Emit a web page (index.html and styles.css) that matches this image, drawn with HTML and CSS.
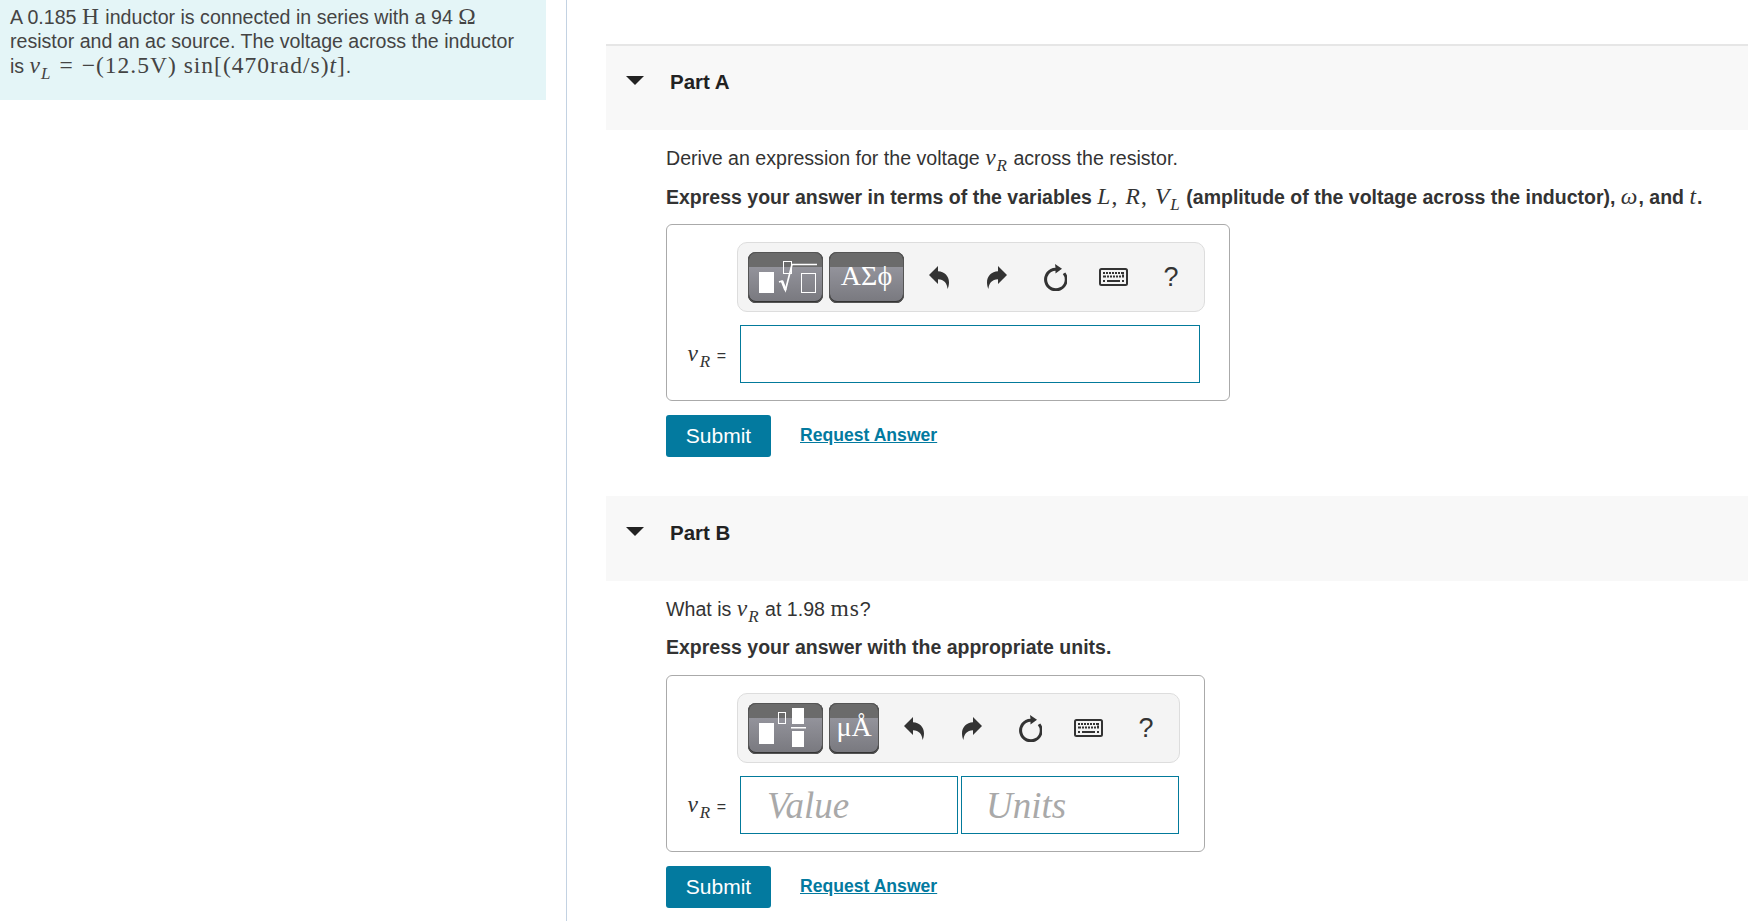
FILE: index.html
```html
<!DOCTYPE html>
<html lang="en">
<head>
    <meta charset="UTF-8">
    <title>Part A and Part B</title>
    <link rel="stylesheet" href="styles.css">
</head>
<body>
    <svg class="sprite" width="0" height="0">
        <symbol id="i-undo" viewBox="0 0 20 23">
            <path d="M0 9 9 0V5.300C15.500 5.600 20 10 20 16.500 20 19 19.300 21.500 18.500 23 18.300 17.500 15 13.500 9 13.300V18Z"/>
        </symbol>
        <symbol id="i-redo" viewBox="0 0 20 23">
            <path d="M20 9 11 0V5.300C4.500 5.600 0 10 0 16.500 0 19 .7 21.500 1.500 23 1.700 17.500 5 13.500 11 13.300V18Z"/>
        </symbol>
        <symbol id="i-reset" viewBox="0 0 24 27">
            <path d="M12 0 19 4.800 12.500 9.500V6.700A8.800 8.800 0 1 0 19.800 10L22.300 8.400A11.800 11.800 0 1 1 12.500 3.700Z"/>
        </symbol>
        <symbol id="i-keys" viewBox="0 0 29 18">
            <rect x="1" y="1" width="27" height="16" rx="1.500" fill="#f4f4f4" stroke="#333" stroke-width="2"/>
            <path d="M4 4h2v2H4zM7 4h2v2H7zM10 4h2v2h-2zM13 4h2v2h-2zM16 4h2v2h-2zM19 4h2v2h-2zM22 4h3v2h-3zM4 7.500h3v2H4zM8 7.500h2v2H8zM11 7.500h2v2h-2zM14 7.500h2v2h-2zM17 7.500h2v2h-2zM20 7.500h2v2h-2zM23 6.500h2v3h-2zM4 12h2v2H4zM8 12h13v2H8zM23 12h2v2h-2z" fill="#333"/>
        </symbol>
    </svg>

    <aside class="sidebar">
        <div class="intro">
            A 0.185 <span class="m">H</span> inductor is connected in series with a 94 <span class="m">Ω</span>
            resistor and an ac source. The voltage across the inductor
            is <span class="m"><i>v<sub>L</sub></i><span class="rel">=</span>−(12.5V) sin[(470rad/s)<i>t</i>]</span>.
        </div>
    </aside>

    <main class="parts">
        <section class="part">
            <h3 class="part-head"><span class="caret"></span>Part A</h3>
            <div class="part-body">
                <p>Derive an expression for the voltage <span class="m"><i>v<sub>R</sub></i></span> across the resistor.</p>
                <p class="hint">Express your answer in terms of the variables <span class="m"><i>L</i>, <i>R</i>, <i>V<sub>L</sub></i></span> (amplitude of the voltage across the inductor), <span class="m"><i>ω</i></span>, and <span class="m"><i>t</i></span>.</p>
                <div class="answer-box">
                    <div class="toolbar">
                        <div class="palette wide">
                            <svg viewBox="0 0 74 51" width="74" height="51">
                                <rect x="11" y="20" width="15" height="21" fill="#fff"/>
                                <rect x="35.500" y="9.500" width="8" height="12" fill="none" stroke="#fff"/>
                                <path d="M31 30 34 29 37.500 38 44 12.500H69" fill="none" stroke="#fff" stroke-width="1.700"/>
                                <path d="M34 29 37.500 38" fill="none" stroke="#fff" stroke-width="2.600"/>
                                <rect x="53.500" y="21.500" width="14" height="19" fill="none" stroke="#fff"/>
                            </svg>
                        </div>
                        <div class="palette wide symbols">ΑΣϕ</div>
                        <button class="tool"><svg width="20" height="23"><use href="#i-undo"/></svg></button>
                        <button class="tool"><svg width="20" height="23"><use href="#i-redo"/></svg></button>
                        <button class="tool"><svg width="24" height="27"><use href="#i-reset"/></svg></button>
                        <button class="tool"><svg width="29" height="18"><use href="#i-keys"/></svg></button>
                        <button class="tool help">?</button>
                    </div>
                    <div class="answer-row">
                        <label class="answer-label"><span class="m"><i>v<sub>R</sub></i></span> =</label>
                        <input class="answer-input full" type="text">
                    </div>
                </div>
                <div class="actions">
                    <button class="submit">Submit</button>
                    <a class="request" href="#">Request Answer</a>
                </div>
            </div>
        </section>

        <section class="part">
            <h3 class="part-head plain"><span class="caret"></span>Part B</h3>
            <div class="part-body">
                <p>What is <span class="m"><i>v<sub>R</sub></i></span> at 1.98 <span class="m">ms</span>?</p>
                <p class="hint">Express your answer with the appropriate units.</p>
                <div class="answer-box">
                    <div class="toolbar">
                        <div class="palette wide">
                            <svg viewBox="0 0 74 51" width="74" height="51">
                                <rect x="11" y="20" width="15" height="21" fill="#fff"/>
                                <rect x="30.500" y="9.500" width="7" height="11" fill="none" stroke="#fff"/>
                                <rect x="44" y="5" width="12" height="16" fill="#fff"/>
                                <rect x="43" y="24" width="15" height="1.500" fill="#fff"/>
                                <rect x="44" y="28" width="12" height="16" fill="#fff"/>
                            </svg>
                        </div>
                        <div class="palette narrow symbols">μÅ</div>
                        <button class="tool"><svg width="20" height="23"><use href="#i-undo"/></svg></button>
                        <button class="tool"><svg width="20" height="23"><use href="#i-redo"/></svg></button>
                        <button class="tool"><svg width="24" height="27"><use href="#i-reset"/></svg></button>
                        <button class="tool"><svg width="29" height="18"><use href="#i-keys"/></svg></button>
                        <button class="tool help">?</button>
                    </div>
                    <div class="answer-row">
                        <label class="answer-label"><span class="m"><i>v<sub>R</sub></i></span> =</label>
                        <input class="answer-input half" type="text" placeholder="Value">
                        <input class="answer-input half" type="text" placeholder="Units">
                    </div>
                </div>
                <div class="actions">
                    <button class="submit">Submit</button>
                    <a class="request" href="#">Request Answer</a>
                </div>
            </div>
        </section>
    </main>
</body>
</html>
```

FILE: styles.css
```css
html, body {
    margin: 0;
    height: 100%;
}
body {
    display: flex;
    overflow: hidden;
    font-family: "Liberation Sans", Arial, sans-serif;
    font-size: 19.600px;
    line-height: 28px;
    color: #333;
    background: #fff;
}
.sprite {
    position: absolute;
}
.sidebar {
    flex: 0 0 566px;
    border-right: 1px solid #c3d2e2;
}
.intro {
    width: 546px;
    height: 100px;
    box-sizing: border-box;
    padding: 4px 30px 0 10px;
    background: #e4f5f7;
    line-height: 24px;
    color: #444;
}
.m {
    font-family: "Liberation Serif", "Times New Roman", serif;
    font-size: 23.500px;
    letter-spacing: 1px;
}
.m sub {
    font-size: 17px;
    line-height: 0;
}
.rel {
    margin: 0 8px;
}
.parts {
    flex: 1;
    min-width: 0;
    padding: 44px 0 0 39px;
}
.part {
    margin-bottom: 39px;
}
.part-head {
    display: flex;
    align-items: center;
    box-sizing: content-box;
    height: 71px;
    margin: 0;
    padding: 0 0 13px 19px;
    border-top: 2px solid #e6e6e6;
    background: #f8f8f8;
    font-size: 20.500px;
    color: #222;
}
.part-head.plain {
    height: 70px;
    border-top-color: #f8f8f8;
}
.caret {
    width: 0;
    height: 0;
    margin: -3px 26px 0 1px;
    border-left: 9px solid transparent;
    border-right: 9px solid transparent;
    border-top: 9px solid #222;
}
.part-body {
    padding: 13px 0 0 60px;
}
.part-body p {
    height: 28px;
    margin: 0 0 11px;
    white-space: nowrap;
}
.part-body .hint {
    margin-bottom: 14px;
    font-size: 19.500px;
    font-weight: bold;
}
.hint .m {
    font-size: 23.500px;
    font-weight: normal;
    letter-spacing: 1.100px;
}
.answer-box {
    width: fit-content;
    padding: 17px 24px 17px 0;
    border: 1px solid #aaa;
    border-radius: 6px;
}
.toolbar {
    display: flex;
    align-items: center;
    width: fit-content;
    height: 68px;
    margin-left: 70px;
    padding: 0 4px 0 10px;
    border: 1px solid #ddd;
    border-radius: 10px;
    background: #f4f4f4;
}
.palette {
    box-sizing: border-box;
    height: 51px;
    margin-right: 6px;
    border-radius: 8px;
    box-shadow: inset 0 0 0 1px #555, inset 0 -1px 0 1px #333;
    background: linear-gradient(#6b6b6b 0, #6b6b6b 30%, #93939b 30%, #78787e 100%);
    overflow: hidden;
}
.palette svg {
    display: block;
}
.wide {
    width: 75px;
}
.narrow {
    width: 50px;
}
.symbols {
    padding-top: 6px;
    font-family: "Liberation Serif", serif;
    font-size: 28px;
    line-height: 36px;
    text-align: center;
    color: #fff;
}
.tool {
    display: flex;
    align-items: center;
    justify-content: center;
    width: 58px;
    height: 40px;
    padding: 0;
    border: 0;
    background: none;
    fill: #333;
    color: #333;
}
.help {
    font-family: "Liberation Sans", sans-serif;
    font-size: 27px;
}
.answer-row {
    display: flex;
    align-items: center;
    gap: 3px;
    margin-top: 13px;
}
.answer-label {
    width: 70px;
    box-sizing: border-box;
    padding-right: 11px;
    font-size: 16px;
    text-align: right;
    white-space: nowrap;
}
.answer-label .m {
    letter-spacing: 2px;
}
.answer-input {
    box-sizing: border-box;
    height: 58px;
    padding: 0 0 0 26px;
    border: 1px solid #037a9b;
    outline: none;
    background: #fff;
    font-family: "Liberation Serif", serif;
    font-style: italic;
    font-size: 37px;
}
.answer-input::placeholder {
    color: #a9a9a9;
    opacity: 1;
}
.answer-input.full {
    width: 460px;
}
.answer-input.half {
    width: 218px;
}
.answer-input.half + .answer-input.half {
    padding-left: 24px;
}
.actions {
    display: flex;
    align-items: center;
    gap: 29px;
    margin-top: 14px;
}
.submit {
    width: 105px;
    height: 42px;
    padding: 0;
    border: 0;
    border-radius: 3px;
    background: #037a9f;
    color: #fff;
    font-family: inherit;
    font-size: 21px;
}
.request {
    margin-top: -2px;
    font-size: 17.600px;
    font-weight: bold;
    color: #037a9f;
}
```
